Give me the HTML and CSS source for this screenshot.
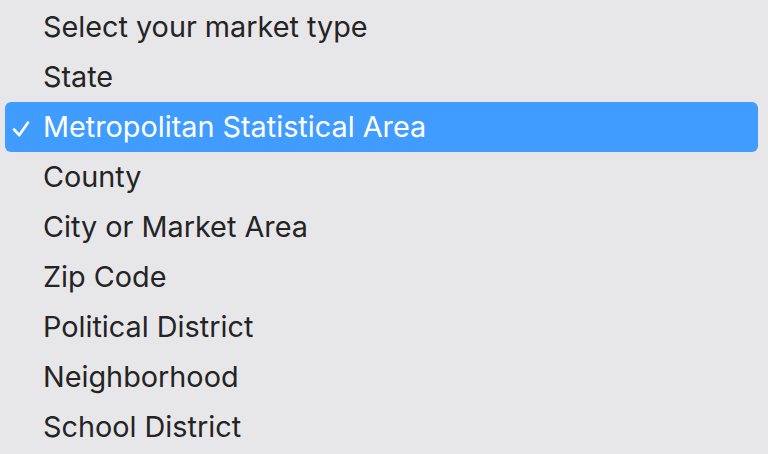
FILE: index.html
```html
<!DOCTYPE html>
<html>
<head>
<meta charset="utf-8">
<link rel="stylesheet" href="styles.css">
</head>
<body>
<ul class="menu">
  <li class="item">Select your market type</li>
  <li class="item">State</li>
  <li class="item selected"><svg class="check" width="20" height="20" viewBox="0 0 20 20"><path d="M3 11.5 L8.2 17.2 L17 4.5" fill="none" stroke="#fff" stroke-width="2.6" stroke-linecap="round" stroke-linejoin="round"/></svg>Metropolitan Statistical Area</li>
  <li class="item">County</li>
  <li class="item">City or Market Area</li>
  <li class="item">Zip Code</li>
  <li class="item">Political District</li>
  <li class="item">Neighborhood</li>
  <li class="item">School District</li>
</ul>
</body>
</html>
```
FILE: styles.css
```css
html, body {
  margin: 0;
  padding: 0;
  background: #e7e7e9;
  width: 768px;
  height: 454px;
  overflow: hidden;
}
.menu {
  list-style: none;
  margin: 0;
  padding: 2px 10px 0 5px;
  font-family: Inter, "Noto Sans", sans-serif;
  font-size: 28.8px;
  color: #242424;
}
.item {
  position: relative;
  height: 50px;
  line-height: 50px;
  padding-left: 38px;
  border-radius: 6px;
}
.selected {
  background: #409dff;
  color: #ffffff;
}
.check {
  position: absolute;
  left: 6px;
  top: 16px;
}
```
